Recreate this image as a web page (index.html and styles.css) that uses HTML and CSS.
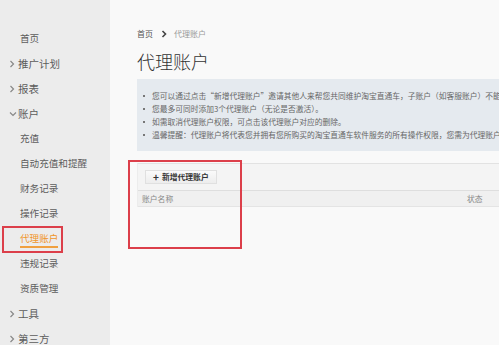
FILE: index.html
```html
<!DOCTYPE html>
<html lang="zh">
<head>
<meta charset="utf-8">
<title>代理账户</title>
<link rel="stylesheet" href="styles.css">
</head>
<body>
<div class="app">
  <nav class="sidebar">
    <div class="nav-item plain">首页</div>
    <div class="nav-item group"><svg class="chev" viewBox="0 0 6 8"><path d="M1.5 1 L4.5 4 L1.5 7"/></svg>推广计划</div>
    <div class="nav-item group"><svg class="chev" viewBox="0 0 6 8"><path d="M1.5 1 L4.5 4 L1.5 7"/></svg>报表</div>
    <div class="nav-item group"><svg class="chev down" viewBox="0 0 8 6"><path d="M1 1.5 L4 4.5 L7 1.5"/></svg>账户</div>
    <div class="nav-item plain">充值</div>
    <div class="nav-item plain">自动充值和提醒</div>
    <div class="nav-item plain">财务记录</div>
    <div class="nav-item plain">操作记录</div>
    <div class="nav-item plain active"><span class="active-text">代理账户</span><span class="mark-box side-mark"></span></div>
    <div class="nav-item plain">违规记录</div>
    <div class="nav-item plain">资质管理</div>
    <div class="nav-item group"><svg class="chev" viewBox="0 0 6 8"><path d="M1.5 1 L4.5 4 L1.5 7"/></svg>工具</div>
    <div class="nav-item group"><svg class="chev" viewBox="0 0 6 8"><path d="M1.5 1 L4.5 4 L1.5 7"/></svg>第三方</div>
  </nav>
  <main class="main">
    <div class="crumbs">
      <span class="crumb-home">首页</span>
      <svg class="crumb-sep" viewBox="0 0 6 8"><path d="M1.5 1 L4.5 4 L1.5 7"/></svg>
      <span class="crumb-cur">代理账户</span>
    </div>
    <h1 class="title">代理账户</h1>
    <ul class="notice">
      <li>您可以通过点击“新增代理账户”邀请其他人来帮您共同维护淘宝直通车，子账户（如客服账户）不能设置为代理账户。</li>
      <li>您最多可同时添加3个代理账户（无论是否激活）。</li>
      <li>如需取消代理账户权限，可点击该代理账户对应的删除。</li>
      <li>温馨提醒：代理账户将代表您并拥有您所购买的淘宝直通车软件服务的所有操作权限，您需为代理账户的操作行为负责。</li>
    </ul>
    <section class="panel">
      <span class="mark-box main-mark"></span>
      <div class="toolbar">
        <button class="btn-add"><span class="plus">+</span>新增代理账户</button>
      </div>
      <div class="table-head">
        <span class="col-name">账户名称</span>
        <span class="col-status">状态</span>
      </div>
    </section>
  </main>
</div>
</body>
</html>
```
FILE: styles.css
```css
* { box-sizing: border-box; }
html, body {
  margin: 0;
  padding: 0;
  width: 499px;
  height: 345px;
  overflow: hidden;
  background: #f9f9f9;
  font-family: "Noto Sans CJK SC", "Noto Sans", sans-serif;
}
.app {
  display: flex;
  height: 345px;
}
.sidebar {
  width: 110px;
  flex: none;
  background: #ececec;
  padding-top: 26px;
  color: #5c5c5c;
  font-size: 9.6px;
}
.nav-item {
  height: 25px;
  line-height: 25px;
  display: flex;
  align-items: center;
  white-space: nowrap;
  position: relative;
}
.nav-item.plain { padding-left: 20px; }
.nav-item.group { padding-left: 9px; font-size: 10.5px; }
.chev {
  width: 6px;
  height: 8px;
  margin-right: 3px;
  fill: none;
  stroke: #888;
  stroke-width: 1.2;
}
.chev.down {
  width: 8px;
  height: 6px;
  margin-right: 1px;
}
.active-text {
  color: #f0952a;
  line-height: 13px;
  border-bottom: 2px solid #f0a040;
  padding-bottom: 1px;
  margin-top: 3px;
}
.mark-box {
  position: absolute;
  border: 2px solid #dc3f4a;
  pointer-events: none;
}
.side-mark {
  left: 2px;
  top: 0px;
  width: 61px;
  height: 27px;
}
.main {
  flex: 1;
  min-width: 0;
  padding: 29px 0 0 27px;
  overflow: hidden;
}
.crumbs {
  display: flex;
  align-items: center;
  height: 10px;
  font-size: 8px;
  line-height: 10px;
}
.crumb-home { color: #555; }
.crumb-sep {
  width: 6px;
  height: 8px;
  margin: 0 7px 0 8px;
  fill: none;
  stroke: #444;
  stroke-width: 1.6;
}
.crumb-cur { color: #999; }
.title {
  margin: 11px 0 0;
  font-size: 18px;
  line-height: 22px;
  font-weight: 300;
  color: #333;
}
.notice {
  margin: 7px 0 0;
  padding: 10px 0 10px 15px;
  list-style: none;
  background: #e5eaef;
  color: #666;
  font-size: 7.75px;
  line-height: 13px;
  white-space: nowrap;
  overflow: hidden;
}
.notice li {
  position: relative;
}
.notice li::before {
  content: "";
  position: absolute;
  left: -9px;
  top: 5.5px;
  width: 2px;
  height: 2px;
  background: #777;
}
.panel {
  position: relative;
  margin-top: 12px;
  border-top: 1px solid #e2e2e2;
  border-left: 1px solid #ececec;
}
.main-mark {
  left: -10px;
  top: -4px;
  width: 114px;
  height: 89px;
}
.toolbar {
  height: 26px;
  background: #f4f4f4;
  display: flex;
  align-items: center;
  padding-left: 7px;
}
.btn-add {
  height: 14px;
  width: 72px;
  padding: 0 0 0 7px;
  border: 1px solid #e0e0e0;
  background: linear-gradient(#fafafa, #ededed);
  font-family: inherit;
  font-size: 7.8px;
  font-weight: 700;
  color: #333;
  display: flex;
  align-items: center;
  line-height: 12px;
}
.plus {
  font-size: 10px;
  margin-right: 3px;
  font-weight: 700;
}
.table-head {
  height: 17px;
  background: #f0f0f0;
  border-top: 1px solid #dedede;
  border-bottom: 1px solid #e4e4e4;
  display: flex;
  align-items: center;
  font-size: 7.8px;
  color: #888;
  padding-left: 4px;
}
.col-name { flex: 1; }
.col-status { width: 32px; }
```
